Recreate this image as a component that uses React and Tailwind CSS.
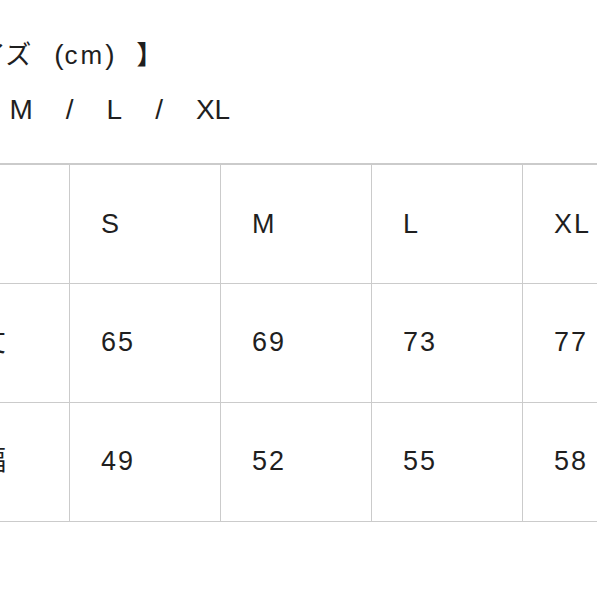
const cols = ["S", "M", "L", "XL"];
const rows = [
  { label: "着丈", values: ["65", "69", "73", "77"] },
  { label: "身幅", values: ["49", "52", "55", "58"] },
];

const font = { fontFamily: '"Liberation Sans", "Noto Sans CJK JP", sans-serif' };

export default function App() {
  return (
    <div className="h-[597px] w-[597px] overflow-hidden bg-white text-[#1f1f1f]" style={font}>
      <div className="-ml-[82px] w-[760px] pt-[38px]">
        <div className="flex items-baseline whitespace-nowrap pl-[10px] text-[26px] leading-[34px] [text-spacing-trim:space-all]">
          <span>【サイズ</span>
          <span className="ml-[23px] text-[28px]">(</span>
          <span className="ml-[1px] tracking-[3px]">cm</span>
          <span className="ml-[0px] text-[28px]">)</span>
          <span className="ml-[22px] font-bold">】</span>
        </div>
        <div className="-ml-[1px] mt-[21px] flex items-center gap-[33px] text-[28px] leading-[34px]">
          <span>S</span>
          <span>/</span>
          <span>M</span>
          <span>/</span>
          <span>L</span>
          <span>/</span>
          <span>XL</span>
        </div>
        <table className="mt-[36px] border-collapse border-t-2 border-[#cbcbcb] text-[27px] tracking-[2px]">
          <tbody>
            <tr>
              <td className="h-[119px] w-[151px] border border-[#cbcbcb] pl-[31px]"></td>
              {cols.map((c) => (
                <td key={c} className="h-[119px] w-[151px] border border-[#cbcbcb] pl-[31px]">
                  {c}
                </td>
              ))}
            </tr>
            {rows.map((r) => (
              <tr key={r.label}>
                <td className="h-[119px] w-[151px] border border-[#cbcbcb] pl-[31px]">{r.label}</td>
                {r.values.map((v, i) => (
                  <td key={i} className="h-[119px] w-[151px] border border-[#cbcbcb] pl-[31px]">
                    {v}
                  </td>
                ))}
              </tr>
            ))}
          </tbody>
        </table>
      </div>
    </div>
  );
}
